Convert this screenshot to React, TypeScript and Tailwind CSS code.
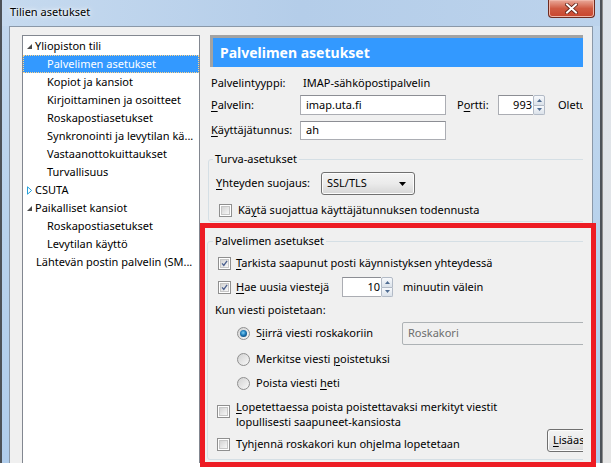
import type { ReactNode } from 'react';

// Win7-tyylinen tilien asetukset -ikkuna

function Check({ on }: { on?: boolean }) {
  return (
    <span className="flex h-[13px] w-[13px] shrink-0 items-center justify-center border border-[#8f8f8f] bg-white">
      <span className="flex h-[9px] w-[9px] items-center justify-center border border-[#c6c6c6] bg-gradient-to-br from-[#d4d4d4] to-[#f7f7f7]">
        {on && (
          <svg width="9" height="9" viewBox="0 0 9 9">
            <path d="M1.4 4.3 L3.6 6.9 L7.8 1.2" fill="none" stroke="#4a5f8e" strokeWidth="1.7" />
          </svg>
        )}
      </span>
    </span>
  );
}

function Radio({ on }: { on?: boolean }) {
  return (
    <span className="flex h-[13px] w-[13px] shrink-0 items-center justify-center rounded-full border border-[#8f8f8f] bg-gradient-to-br from-[#d2d2d2] to-[#f8f8f8]">
      {on && (
        <span className="h-[7px] w-[7px] rounded-full bg-[radial-gradient(circle_at_45%_40%,#7fd0f5_0%,#1c79b8_45%,#0b2f55_100%)]" />
      )}
    </span>
  );
}

function Spin() {
  return (
    <span className="flex h-[20px] w-[12px] shrink-0 flex-col">
      <span className="flex flex-1 items-center justify-center rounded-t-[2px] border border-[#b2bac6] bg-gradient-to-b from-[#f7f9fc] to-[#dbe2ea]">
        <svg width="5" height="3" viewBox="0 0 5 3">
          <path d="M0 3 L2.5 0 L5 3 Z" fill="#4f6c92" />
        </svg>
      </span>
      <span className="flex flex-1 items-center justify-center rounded-b-[2px] border border-t-0 border-[#b2bac6] bg-gradient-to-b from-[#f7f9fc] to-[#dbe2ea]">
        <svg width="5" height="3" viewBox="0 0 5 3">
          <path d="M0 0 L2.5 3 L5 0 Z" fill="#4f6c92" />
        </svg>
      </span>
    </span>
  );
}

function Btn({ children, className = '' }: { children: ReactNode; className?: string }) {
  return (
    <span
      className={`flex h-[23px] shrink-0 items-center rounded-[3px] border border-[#707070] bg-gradient-to-b from-[#f3f3f3] via-[#ebebeb] to-[#d6d6d6] shadow-[inset_0_0_0_1px_#fcfcfc] ${className}`}
    >
      {children}
    </span>
  );
}

const u = (c: string) => <span className="underline underline-offset-[2px]">{c}</span>;

const ExpandedArrow = () => (
  <svg width="7" height="7" viewBox="0 0 7 7" className="shrink-0">
    <path d="M6 1 L6 6 L1 6 Z" fill="#4b4b4b" />
  </svg>
);

const CollapsedArrow = () => (
  <svg width="7" height="9" viewBox="0 0 7 9" className="shrink-0">
    <path d="M1.5 0.8 L5.6 4.5 L1.5 8.2 Z" fill="#fff" stroke="#26a0da" strokeWidth="1" />
  </svg>
);

const tree = [
  { label: 'Yliopiston tili', level: 0, arrow: 'open' },
  { label: 'Palvelimen asetukset', level: 1, selected: true },
  { label: 'Kopiot ja kansiot', level: 1 },
  { label: 'Kirjoittaminen ja osoitteet', level: 1 },
  { label: 'Roskapostiasetukset', level: 1 },
  { label: 'Synkronointi ja levytilan kä...', level: 1 },
  { label: 'Vastaanottokuittaukset', level: 1 },
  { label: 'Turvallisuus', level: 1 },
  { label: 'CSUTA', level: 0, arrow: 'closed' },
  { label: 'Paikalliset kansiot', level: 0, arrow: 'open' },
  { label: 'Roskapostiasetukset', level: 1 },
  { label: 'Levytilan käyttö', level: 1 },
  { label: 'Lähtevän postin palvelin (SM...', level: 0 },
];

export default function App() {
  return (
    <div className="relative h-[476px] w-[611px] overflow-hidden bg-white font-['Noto_Sans',sans-serif] text-[11px] text-black">
      <div className="flex h-[463px]">
        {/* ikkuna */}
        <div className="flex w-[602px] flex-col border-x-2 border-[#4d5258] bg-gradient-to-b from-[#c3d8ee] via-[#b8d2ec] to-[#b0cdec]">
          <div className="flex h-[26px] shrink-0 items-start justify-between bg-gradient-to-r from-[#c6daef] via-[#b4cde9] to-[#bcd3ec] pl-[8px] pr-[5px]">
            <span className="mt-[4px] text-[11px] text-black [text-shadow:0_0_6px_#fff,0_0_3px_#fff]">Tilien asetukset</span>
            <span className="flex h-[18px] w-[47px] items-center justify-center rounded-b-[4px] border border-t-0 border-[#6e2b20] bg-gradient-to-b from-[#e9a99a] via-[#cf5a42] to-[#c8452d] shadow-[inset_0_0_0_1px_#f0b6a8]">
              <svg width="13" height="11" viewBox="0 0 13 11">
                <path d="M2 1.5 L11 9.5 M11 1.5 L2 9.5" stroke="#5a1e14" strokeWidth="3.6" strokeLinecap="square" />
                <path d="M2 1.5 L11 9.5 M11 1.5 L2 9.5" stroke="#fff" strokeWidth="2" strokeLinecap="square" />
              </svg>
            </span>
          </div>

          <div className="mx-[7px] flex min-h-0 flex-1 overflow-hidden border-x border-t border-[#8a98a8] bg-[#f0f0f0] pl-[12px] pr-[9px] pt-[8px]">
            {/* puu */}
            <div className="w-[178px] shrink-0 border border-b-0 border-[#828790] bg-white pt-[1px]">
              {tree.map((t, i) => (
                <div
                  key={i}
                  className={`flex h-[18px] items-center gap-[2px] whitespace-nowrap ${
                    t.selected ? 'border border-dotted border-[#ffd58a] bg-[#3399ff] text-white' : ''
                  } ${t.level === 1 ? 'pl-[24px]' : t.arrow ? 'pl-[3px]' : 'pl-[13px]'}`}
                >
                  {t.arrow === 'open' && <ExpandedArrow />}
                  {t.arrow === 'closed' && <CollapsedArrow />}
                  <span className={t.selected ? '-ml-[1px]' : ''}>{t.label}</span>
                </div>
              ))}
            </div>

            {/* oikea paneeli */}
            <div className="ml-[7px] w-[376px] shrink-0 overflow-hidden">
              <div className="ml-[3px] flex h-[32px] items-center border-l-[3px] border-t-[3px] border-[#a3a3a3] bg-[#3399ff] pl-[7px] text-[14px] font-bold text-white">
                Palvelimen asetukset
              </div>

              <div className="mt-[6px] flex h-[20px] items-center pl-[4px]">
                <span className="w-[89px] shrink-0">Palvelintyyppi:</span>
                <span className="pl-[3px]">IMAP-sähköpostipalvelin</span>
              </div>

              <div className="mt-[2px] flex h-[20px] items-center whitespace-nowrap pl-[4px]">
                <span className="w-[89px] shrink-0">{u('P')}alvelin:</span>
                <span className="flex h-[20px] w-[146px] shrink-0 items-center border border-[#abadb3] border-t-[#8c8e94] bg-white pl-[5px]">
                  imap.uta.fi
                </span>
                <span className="ml-[11px] w-[41px] shrink-0">P{u('o')}rtti:</span>
                <span className="flex h-[20px] w-[35px] shrink-0 items-center justify-end border border-r-0 border-[#abadb3] border-t-[#8c8e94] bg-white pr-[1px]">
                  993
                </span>
                <Spin />
                <span className="ml-[13px]">Oletus: 993</span>
              </div>

              <div className="mt-[5px] flex h-[20px] items-center pl-[4px]">
                <span className="w-[89px] shrink-0">{u('K')}äyttäjätunnus:</span>
                <span className="flex h-[19px] w-[146px] shrink-0 items-center border border-[#abadb3] border-t-[#8c8e94] bg-white pl-[5px]">
                  ah
                </span>
              </div>

              <fieldset className="ml-[1px] mt-[11px] w-[420px] rounded-[3px] border border-[#d5dfe5] pb-[3px]">
                <legend className="ml-[4px] px-[2px] leading-[16px]">Turva-asetukset</legend>
                <div className="mt-[5px] flex h-[23px] items-center pl-[7px]">
                  <span className="w-[105px] shrink-0">{u('Y')}hteyden suojaus:</span>
                  <Btn className="w-[94px] justify-between pl-[5px] pr-[8px]">
                    <span>SSL/TLS</span>
                    <svg width="7" height="4" viewBox="0 0 7 4">
                      <path d="M0 0 L7 0 L3.5 4 Z" fill="#000" />
                    </svg>
                  </Btn>
                </div>
                <div className="mt-[7px] flex h-[16px] items-center gap-[6px] pl-[10px]">
                  <Check />
                  <span>Kä{u('y')}tä suojattua käyttäjätunnuksen todennusta</span>
                </div>
              </fieldset>

              <fieldset className="mt-[11px] w-[420px] rounded-[3px] border border-[#d5dfe5] pb-[7px]">
                <legend className="ml-[5px] px-[2px] leading-[16px]">Palvelimen asetukset</legend>
                <div className="mt-[6px] flex h-[16px] items-center gap-[5px] pl-[10px]">
                  <Check on />
                  <span>{u('T')}arkista saapunut posti käynnistyksen yhteydessä</span>
                </div>
                <div className="mt-[6px] flex h-[20px] items-center pl-[10px]">
                  <Check on />
                  <span className="ml-[5px] w-[106px] shrink-0">{u('H')}ae uusia viestejä</span>
                  <span className="flex h-[20px] w-[39px] shrink-0 items-center justify-end border border-r-0 border-[#abadb3] border-t-[#8c8e94] bg-white pr-[1px]">
                    10
                  </span>
                  <Spin />
                  <span className="ml-[10px]">minuutin välein</span>
                </div>
                <div className="mt-[5px] flex h-[16px] items-center pl-[7px]">Kun viesti poistetaan:</div>
                <div className="mt-[4px] flex h-[23px] items-center pl-[29px]">
                  <Radio on />
                  <span className="ml-[6px] w-[146px] shrink-0">S{u('i')}irrä viesti roskakoriin</span>
                  <span className="flex h-[23px] w-[220px] shrink-0 items-center rounded-[2px] border border-[#adb2b5] bg-[#f0f0f0] pl-[5px] text-[#6d6d6d]">
                    Roskakori
                  </span>
                </div>
                <div className="mt-[6px] flex h-[16px] items-center gap-[6px] pl-[29px]">
                  <Radio />
                  <span>Merkitse viesti {u('p')}oistetuksi</span>
                </div>
                <div className="mt-[8px] flex h-[16px] items-center gap-[6px] pl-[29px]">
                  <Radio />
                  <span>Poista viesti {u('h')}eti</span>
                </div>
                <div className="mt-[8px] flex items-start gap-[6px] pl-[9px]">
                  <span className="mt-[6px]">
                    <Check />
                  </span>
                  <span className="leading-[15px]">
                    {u('L')}opetettaessa poista poistettavaksi merkityt viestit
                    <br />
                    lopullisesti saapuneet-kansiosta
                  </span>
                </div>
                <div className="flex h-[23px] items-end pl-[9px]">
                  <span className="flex h-[16px] w-[330px] shrink-0 items-center gap-[6px]">
                    <Check />
                    <span>Tyh{u('j')}ennä roskakori kun ohjelma lopetetaan</span>
                  </span>
                  <Btn className="w-[80px] self-start pl-[5px]">
                    <span>{u('L')}isäasetukset…</span>
                  </Btn>
                </div>
              </fieldset>
            </div>
          </div>
        </div>
        {/* taustaikkuna */}
        <div className="flex-1 border-l border-[#8d8d8d] bg-gradient-to-b from-[#dde3ea] to-[#e6e6e6]" />
      </div>

      {/* punainen korostus */}
      <div className="pointer-events-none absolute left-[200px] top-[223px] h-[244px] w-[396px] border-[5px] border-[#ed1c24]" />
    </div>
  );
}
